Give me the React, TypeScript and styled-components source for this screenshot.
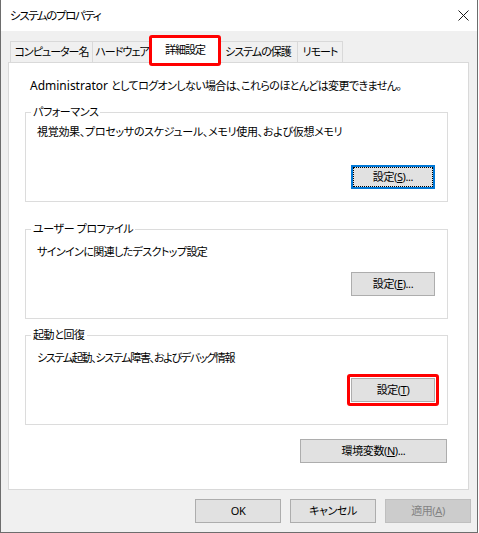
import React from "react";
import styled, { createGlobalStyle, css } from "styled-components";

const GlobalStyle = createGlobalStyle`
  html, body {
    margin: 0;
    padding: 0;
    background: #ffffff;
  }
  body {
    font-family: "Noto Sans", "Noto Sans CJK JP", sans-serif;
    font-size: 11px;
    letter-spacing: -0.4px;
    color: #000000;
    font-feature-settings: "palt";
  }
`;

const Window = styled.div`
  box-sizing: border-box;
  width: 478px;
  height: 533px;
  border: 1px solid #6d6d6d;
  border-top: none;
  background: #f0f0f0;
  display: flex;
  flex-direction: column;
`;

const TitleBar = styled.div`
  height: 31px;
  flex: none;
  background: #ffffff;
  display: flex;
  align-items: center;
  justify-content: space-between;
  padding: 0 8px 0 9px;
  line-height: 16px;
`;

const TitleText = styled.span`
  font-size: 11.5px;
  letter-spacing: -1.4px;
`;

const Sheet = styled.div`
  padding: 6px 8px 0 7px;
  display: flex;
  flex-direction: column;
`;

const TabStrip = styled.div`
  height: 25px;
  display: flex;
  align-items: flex-end;
  padding-left: 2px;
`;

const Tab = styled.div<{ $w: number; $active?: boolean }>`
  box-sizing: border-box;
  width: ${(p) => p.$w}px;
  height: 21px;
  margin-left: -1px;
  border: 1px solid #d9d9d9;
  border-bottom: none;
  background: #f0f0f0;
  display: flex;
  align-items: center;
  justify-content: center;
  line-height: 16px;
  letter-spacing: -1px;
  white-space: nowrap;
  &:first-child {
    margin-left: 0;
  }
  ${(p) =>
    p.$active &&
    css`
      position: relative;
      z-index: 1;
      height: 26px;
      margin-bottom: -1px;
      background: #ffffff;
      padding-bottom: 2px;
    `}
`;

const Highlight = styled.span<{ $inset: number }>`
  position: absolute;
  inset: -${(p) => p.$inset}px;
  border: 3px solid #ff0000;
  border-radius: 3px;
  pointer-events: none;
`;

const Panel = styled.div`
  box-sizing: border-box;
  height: 428px;
  border: 1px solid #d9d9d9;
  background: #ffffff;
  padding: 15px 20px 0 16px;
  display: flex;
  flex-direction: column;
`;

const Intro = styled.div`
  line-height: 16px;
  padding-left: 5px;
  white-space: nowrap;
  letter-spacing: -0.6px;
`;

const Latin = styled.span`
  font-size: 12px;
  letter-spacing: 0;
`;

const GroupBox = styled.div<{ $top: number }>`
  box-sizing: border-box;
  height: 90px;
  margin-top: ${(p) => p.$top}px;
  border: 1px solid #dcdcdc;
  display: flex;
  flex-direction: column;
  padding: 0 12px 0 11px;
`;

const GroupLabel = styled.span`
  align-self: flex-start;
  margin: -9px 0 0 -6px;
  padding: 0 2px;
  background: #ffffff;
  line-height: 16px;
`;

const GroupText = styled.div<{ $top: number; $ls: number }>`
  margin-top: ${(p) => p.$top}px;
  line-height: 16px;
  letter-spacing: ${(p) => p.$ls}px;
  white-space: nowrap;
`;

const Button = styled.button<{ $w: number; $focus?: boolean }>`
  position: relative;
  box-sizing: border-box;
  width: ${(p) => p.$w}px;
  height: 24px;
  padding: 0;
  border: 1px solid #adadad;
  background: #e1e1e1;
  font: inherit;
  letter-spacing: inherit;
  line-height: 16px;
  color: #000000;
  flex: none;
  &:disabled {
    border-color: #bfbfbf;
    background: #cccccc;
    color: #838383;
  }
  ${(p) =>
    p.$focus &&
    css`
      border: 2px solid #0078d7;
      outline: 1px dotted #000000;
      outline-offset: -3px;
    `}
`;

const GroupButton = styled(Button)<{ $top: number }>`
  align-self: flex-end;
  margin-top: ${(p) => p.$top}px;
`;

const EnvButton = styled(Button)`
  align-self: flex-end;
  margin: 14px 1px 0 0;
`;

const Footer = styled.div`
  display: flex;
  justify-content: flex-end;
  gap: 9px;
  padding: 9px 6px 0 0;
`;

const CloseIcon = () => (
  <svg width="11" height="11" viewBox="0 0 11 11">
    <path d="M0.5 0.5L10.5 10.5M10.5 0.5L0.5 10.5" stroke="#1a1a1a" strokeWidth="1" />
  </svg>
);

const tabs = [
  { label: "コンピューター名", w: 83 },
  { label: "ハードウェア", w: 60 },
  { label: "詳細設定", w: 68, active: true },
  { label: "システムの保護", w: 80 },
  { label: "リモート", w: 46 },
];

export default function App() {
  return (
    <>
      <GlobalStyle />
      <Window>
        <TitleBar>
          <TitleText>システムのプロパティ</TitleText>
          <CloseIcon />
        </TitleBar>
        <Sheet>
          <TabStrip>
            {tabs.map((t) => (
              <Tab key={t.label} $w={t.w} $active={t.active}>
                {t.label}
                {t.active && <Highlight $inset={3} />}
              </Tab>
            ))}
          </TabStrip>
          <Panel>
            <Intro>
              <Latin>Administrator </Latin>としてログオンしない場合は、これらのほとんどは変更できません。
            </Intro>
            <GroupBox $top={18}>
              <GroupLabel>パフォーマンス</GroupLabel>
              <GroupText $top={4} $ls={-0.3}>
                視覚効果、プロセッサのスケジュール、メモリ使用、および仮想メモリ
              </GroupText>
              <GroupButton $w={84} $top={25} $focus>
                設定(<u>S</u>)...
              </GroupButton>
            </GroupBox>
            <GroupBox $top={27}>
              <GroupLabel>ユーザー プロファイル</GroupLabel>
              <GroupText $top={7} $ls={-0.6}>
                サインインに関連したデスクトップ設定
              </GroupText>
              <GroupButton $w={84} $top={12}>
                設定(<u>E</u>)...
              </GroupButton>
            </GroupBox>
            <GroupBox $top={16}>
              <GroupLabel>起動と回復</GroupLabel>
              <GroupText $top={7} $ls={-1.3}>
                システム起動、システム障害、およびデバッグ情報
              </GroupText>
              <GroupButton $w={84} $top={12}>
                設定(<u>T</u>)
                <Highlight $inset={5} />
              </GroupButton>
            </GroupBox>
            <EnvButton $w={147}>
              環境変数(<u>N</u>)...
            </EnvButton>
          </Panel>
        </Sheet>
        <Footer>
          <Button $w={86}>OK</Button>
          <Button $w={86}>キャンセル</Button>
          <Button $w={86} disabled>
            適用(<u>A</u>)
          </Button>
        </Footer>
      </Window>
    </>
  );
}
